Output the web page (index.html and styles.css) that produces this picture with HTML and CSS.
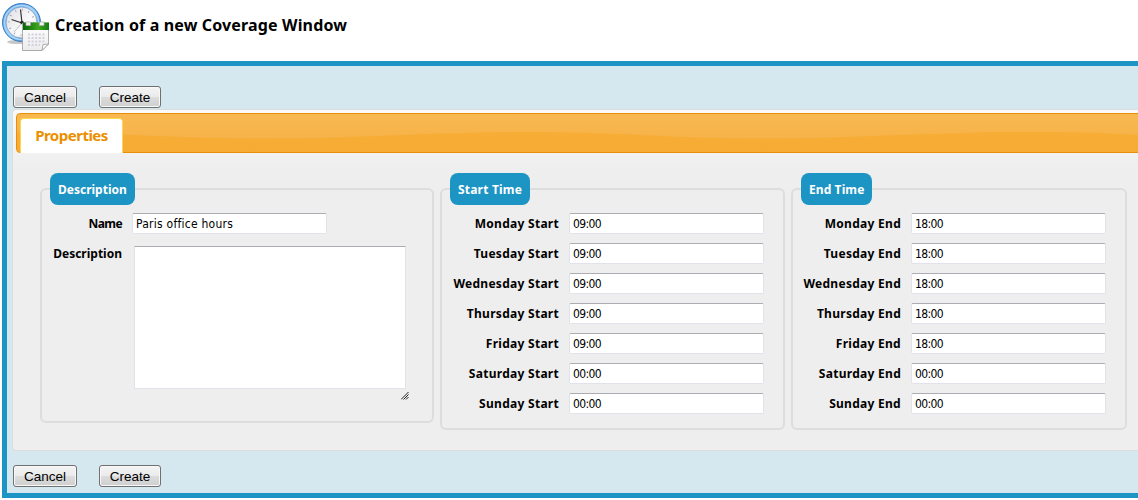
FILE: index.html
```
<!DOCTYPE html>
<html lang="en">
<head>
	<meta charset="utf-8">
	<title>Creation of a new Coverage Window</title>
	<link rel="stylesheet" href="styles.css">
</head>
<body>
<!-- page header -->
<div class="page_header">
	<svg class="icon" width="50" height="52" viewBox="0 0 50 52">
		<defs>
			<linearGradient id="ring" x1="0" y1="0" x2="1" y2="1">
				<stop offset="0" stop-color="#4a94dc"/><stop offset=".5" stop-color="#8ec5f3"/><stop offset="1" stop-color="#2463ad"/>
			</linearGradient>
			<linearGradient id="face" x1="0" y1="0" x2="1" y2="1">
				<stop offset="0" stop-color="#dcdde2"/><stop offset=".6" stop-color="#fbfbfc"/><stop offset="1" stop-color="#e4e4ea"/>
			</linearGradient>
			<linearGradient id="green" x1="0" y1="0" x2="1" y2="0">
				<stop offset="0" stop-color="#096309"/><stop offset=".6" stop-color="#40a820"/><stop offset="1" stop-color="#117b10"/>
			</linearGradient>
			<linearGradient id="sheet" x1="0" y1="0" x2="0" y2="1">
				<stop offset="0" stop-color="#fff"/><stop offset="1" stop-color="#ececee"/>
			</linearGradient>
		</defs>
		<ellipse cx="18" cy="42" rx="11" ry="2" fill="#a9a9a9" opacity=".65"/>
		<circle cx="21.5" cy="22.5" r="19" fill="url(#ring)" stroke="#367bc5" stroke-width="1"/>
		<circle cx="21.5" cy="22.5" r="17" fill="none" stroke="#a9d5fa" stroke-width="1.6"/>
		<circle cx="21.5" cy="22.5" r="15.5" fill="url(#face)" stroke="#6f96c2" stroke-width=".7"/>
		<circle cx="21.5" cy="22.5" r="12.8" fill="none" stroke="#9a9ca6" stroke-width="2.2" stroke-dasharray=".8 5.9"/>
		<path d="M22 23L20.5 9.5M22 23L11.5 19.5" stroke="#333" stroke-width="1.2" fill="none"/>
		<path d="M22 23L14 32" stroke="#aaa" stroke-width=".7"/>
		<circle cx="22" cy="22.5" r="1.8" fill="#222"/>
		<path d="M22.5 23h26v21l-6.5 6.5H22.5z" fill="url(#sheet)" stroke="#999" stroke-width=".8"/>
		<path d="M23 22.5h26v7.5H23z" fill="url(#green)"/>
		<path d="M28 34.5h17M28 38h17M28 41.5h17M28 45h12" stroke="#d2d0de" stroke-width="2" stroke-dasharray="2 1.6"/>
		<path d="M42 50.5l1-6 5.5-.5z" fill="#fff" stroke="#999" stroke-width=".8"/>
		<path d="M26 22h4.5v3.5H26zM39.5 22H44v3.5h-4.5z" fill="#f3f3f3" stroke="#aaa" stroke-width=".7"/>
	</svg>
	<h1>Creation of a new Coverage Window</h1>
</div>

<div class="wizContainer">
	<div class="actions">
		<button type="button" class="btn cancel">Cancel</button>
		<button type="button" class="btn create">Create</button>
	</div>
	<div class="tabs">
		<div class="tabs_nav">
			<svg class="wave" width="1130" height="38" viewBox="0 0 1130 38">
				<path d="M0 18C90 18 150 24.500 248 24.500S415 18 513 18S650 24.500 745 24.500S915 18 1008 18S1090 20 1130 21V38H0z" fill="#f6a828" opacity=".6"/>
			</svg>
			<a class="tab">Properties</a>
		</div>
		<div class="tabs_panel">
			<fieldset class="description">
				<legend>Description</legend>
				<div class="field name"><label>Name</label><input type="text" value="Paris office hours"></div>
				<div class="field area">
					<label>Description</label>
					<div class="resizable">
						<textarea></textarea>
						<svg class="grip" width="8" height="8" viewBox="0 0 8 8"><path d="M0 7.5L7.5 0M2.5 7.5L7.5 2.5M5 7.5L7.5 5" stroke="#222" stroke-width="1" fill="none"/></svg>
					</div>
				</div>
			</fieldset>
			<fieldset class="start">
				<legend>Start Time</legend>
				<div class="field"><label>Monday Start</label><input type="text" value="09:00"></div>
				<div class="field"><label>Tuesday Start</label><input type="text" value="09:00"></div>
				<div class="field"><label>Wednesday Start</label><input type="text" value="09:00"></div>
				<div class="field"><label>Thursday Start</label><input type="text" value="09:00"></div>
				<div class="field"><label>Friday Start</label><input type="text" value="09:00"></div>
				<div class="field"><label>Saturday Start</label><input type="text" value="00:00"></div>
				<div class="field"><label>Sunday Start</label><input type="text" value="00:00"></div>
			</fieldset>
			<fieldset class="end">
				<legend>End Time</legend>
				<div class="field"><label>Monday End</label><input type="text" value="18:00"></div>
				<div class="field"><label>Tuesday End</label><input type="text" value="18:00"></div>
				<div class="field"><label>Wednesday End</label><input type="text" value="18:00"></div>
				<div class="field"><label>Thursday End</label><input type="text" value="18:00"></div>
				<div class="field"><label>Friday End</label><input type="text" value="18:00"></div>
				<div class="field"><label>Saturday End</label><input type="text" value="00:00"></div>
				<div class="field"><label>Sunday End</label><input type="text" value="00:00"></div>
			</fieldset>
		</div>
	</div>
	<div class="actions bottom">
		<button type="button" class="btn cancel">Cancel</button>
		<button type="button" class="btn create">Create</button>
	</div>
</div>
</body>
</html>
```

FILE: styles.css
```
*{box-sizing:border-box;}
body{margin:0;height:500px;overflow:hidden;background:#fff;color:#000;font-family:Tahoma,"Noto Sans",sans-serif;font-size:12px;}

.page_header{display:flex;height:61px;}
.page_header .icon{flex:none;}
.page_header h1{margin:14px 0 0 5px;font-size:16px;line-height:22px;font-weight:bold;white-space:nowrap;letter-spacing:.15px;}

.wizContainer{width:1160px;height:437px;margin-left:2px;border:5px solid #1c94c4;background:#d5e8ef;padding:20px 0 0 5px;}
.actions{display:flex;gap:22px;padding-left:1px;height:23px;}
.actions.bottom{margin-top:14px;}
.btn{height:22px;padding:1px 0 0;border:1px solid #707070;border-radius:3px;background:linear-gradient(#f4f4f4,#ebebeb 48%,#dcdcdc 52%,#cfcfcf);box-shadow:inset 0 0 0 1px #f8f8f8;font:13.5px/19px "Liberation Sans",Arial,sans-serif;color:#000;}
.btn.cancel{width:64px;}
.btn.create{width:62px;}

/* tabs */
.tabs{height:342px;border:1px solid #ddd;border-radius:4px;padding:3px;background:linear-gradient(#fafafa,#eee 60px);}
.tabs_nav{position:relative;display:flex;height:40px;padding:4px 0 0 3px;border:1px solid #e78f08;border-radius:4px;background:linear-gradient(#f8b850,#f6b046);}
.tabs_nav .wave{position:absolute;left:0;top:0;}
.tab{position:relative;width:103px;height:35px;border:1px solid #fbd850;border-bottom:0;border-radius:4px 4px 0 0;background:#fff;color:#eb8f00;font:bold 15px/33px "Trebuchet MS","Noto Sans",sans-serif;text-align:center;letter-spacing:-.5px;}
.tabs_panel{display:flex;align-items:flex-start;gap:6px;padding:20px 0 0 24px;}

/* form */
fieldset{flex:none;margin:0;border:2px solid #ddd;border-radius:6px;padding:8px 0 14px;min-width:0;}
fieldset.description{width:394px;height:250px;}
fieldset.start{width:345px;}
fieldset.end{width:336px;}
legend{height:32px;margin-left:8px;padding:0 0 0 8px;border-radius:8px;background:#1c94c4;color:#fff;font-weight:bold;line-height:33px;white-space:nowrap;}
.description legend{width:85px;}
.start legend{width:80px;letter-spacing:.2px;}
.end legend{width:71px;letter-spacing:.1px;}
.field{display:flex;height:21px;margin-bottom:9px;}
.field:last-child{margin-bottom:0;}
.field label{flex:none;margin-right:10px;font-weight:bold;line-height:21px;text-align:right;white-space:nowrap;letter-spacing:.28px;}
.description label{width:80px;}
.start label{width:117px;}
.end label{width:108px;}
.field input{width:195px;height:21px;padding:0 3px;border:1px solid #e2e3ea;border-top-color:#abadb3;border-radius:2px;background:#fff;font:12px/18px Tahoma,"DejaVu Sans Condensed","Noto Sans",sans-serif;color:#000;letter-spacing:-.6px;}
.field.name input{letter-spacing:.25px;}
.field.name label{letter-spacing:-.6px;}
.field.area{height:158px;}
.field.area label{letter-spacing:0;}
.resizable{position:relative;margin:3px 0 0 2px;}
.resizable textarea{display:block;width:272px;height:143px;border:1px solid #e2e3ea;border-top-color:#abadb3;background:#fff;resize:none;}
.grip{position:absolute;right:-3px;bottom:1px;}
```
